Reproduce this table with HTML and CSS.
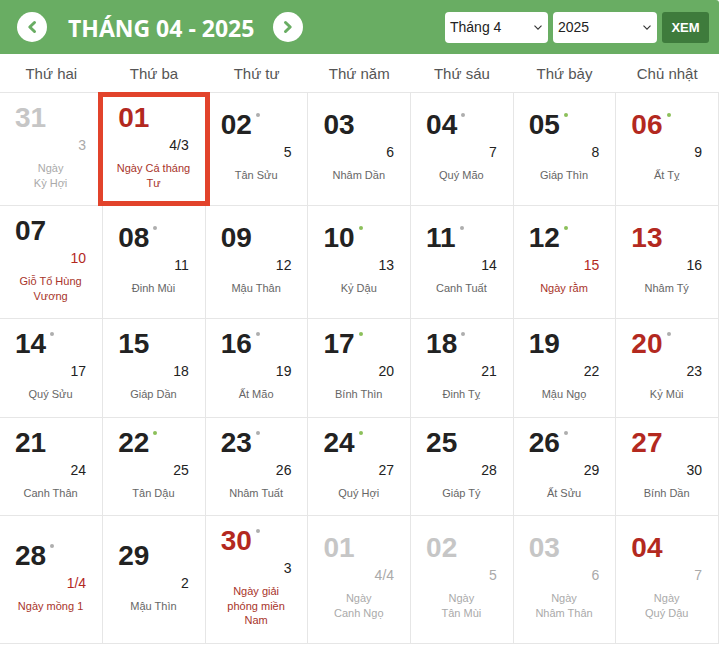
FILE: index.html
```html
<!DOCTYPE html>
<html lang="vi">
<head>
<meta charset="utf-8">
<title>Lịch tháng 04 - 2025</title>
<link rel="stylesheet" href="styles.css">
</head>
<body>
<div class="cal">
  <div class="top">
    <div class="nav">
      <button class="circ" aria-label="Tháng trước"><svg width="30" height="30" viewBox="0 0 30 30"><polyline points="17.5,10.5 12.8,15 17.5,19.5" fill="none" stroke="#69ad63" stroke-width="3" stroke-linecap="round" stroke-linejoin="round"/></svg></button>
      <h1 class="title">THÁNG 04 - 2025</h1>
      <button class="circ" aria-label="Tháng sau"><svg width="30" height="30" viewBox="0 0 30 30"><polyline points="12.5,10.5 17.2,15 12.5,19.5" fill="none" stroke="#69ad63" stroke-width="3" stroke-linecap="round" stroke-linejoin="round"/></svg></button>
    </div>
    <div class="form">
      <div class="sel"><span>Tháng 4</span><svg width="8" height="5" viewBox="0 0 8 5"><polyline points="0.5,0.6 4,4.2 7.5,0.6" fill="none" stroke="#333" stroke-width="1.1"/></svg></div>
      <div class="sel sel-y"><span>2025</span><svg width="8" height="5" viewBox="0 0 8 5"><polyline points="0.5,0.6 4,4.2 7.5,0.6" fill="none" stroke="#333" stroke-width="1.1"/></svg></div>
      <button class="go">XEM</button>
    </div>
  </div>
  <table class="grid">
    <thead>
      <tr><th>Thứ hai</th><th>Thứ ba</th><th>Thứ tư</th><th>Thứ năm</th><th>Thứ sáu</th><th>Thứ bảy</th><th>Chủ nhật</th></tr>
    </thead>
    <tbody>
      <tr>
        <td class="out"><div class="n">31</div><div class="l">3</div><div class="t">Ngày<br>Kỳ Hợi</div></td>
        <td class="today"><div class="n red">01</div><div class="l">4/3</div><div class="t ev">Ngày Cá tháng Tư</div></td>
        <td><div class="n">02<i class="dot gy"></i></div><div class="l">5</div><div class="t">Tân Sửu</div></td>
        <td><div class="n">03</div><div class="l">6</div><div class="t">Nhâm Dần</div></td>
        <td><div class="n">04<i class="dot gy"></i></div><div class="l">7</div><div class="t">Quý Mão</div></td>
        <td><div class="n">05<i class="dot gr"></i></div><div class="l">8</div><div class="t">Giáp Thìn</div></td>
        <td><div class="n red">06<i class="dot gr"></i></div><div class="l">9</div><div class="t">Ất Tỵ</div></td>
      </tr>
      <tr>
        <td><div class="n">07</div><div class="l red">10</div><div class="t ev">Giỗ Tổ Hùng Vương</div></td>
        <td><div class="n">08<i class="dot gy"></i></div><div class="l">11</div><div class="t">Đinh Mùi</div></td>
        <td><div class="n">09</div><div class="l">12</div><div class="t">Mậu Thân</div></td>
        <td><div class="n">10<i class="dot gr"></i></div><div class="l">13</div><div class="t">Kỷ Dậu</div></td>
        <td><div class="n">11<i class="dot gy"></i></div><div class="l">14</div><div class="t">Canh Tuất</div></td>
        <td><div class="n">12<i class="dot gr"></i></div><div class="l red">15</div><div class="t ev">Ngày rằm</div></td>
        <td><div class="n red">13</div><div class="l">16</div><div class="t">Nhâm Tý</div></td>
      </tr>
      <tr>
        <td><div class="n">14<i class="dot gy"></i></div><div class="l">17</div><div class="t">Quý Sửu</div></td>
        <td><div class="n">15</div><div class="l">18</div><div class="t">Giáp Dần</div></td>
        <td><div class="n">16<i class="dot gy"></i></div><div class="l">19</div><div class="t">Ất Mão</div></td>
        <td><div class="n">17<i class="dot gr"></i></div><div class="l">20</div><div class="t">Bính Thìn</div></td>
        <td><div class="n">18<i class="dot gy"></i></div><div class="l">21</div><div class="t">Đinh Tỵ</div></td>
        <td><div class="n">19</div><div class="l">22</div><div class="t">Mậu Ngọ</div></td>
        <td><div class="n red">20<i class="dot gy"></i></div><div class="l">23</div><div class="t">Kỷ Mùi</div></td>
      </tr>
      <tr>
        <td><div class="n">21</div><div class="l">24</div><div class="t">Canh Thân</div></td>
        <td><div class="n">22<i class="dot gr"></i></div><div class="l">25</div><div class="t">Tân Dậu</div></td>
        <td><div class="n">23<i class="dot gy"></i></div><div class="l">26</div><div class="t">Nhâm Tuất</div></td>
        <td><div class="n">24<i class="dot gr"></i></div><div class="l">27</div><div class="t">Quý Hợi</div></td>
        <td><div class="n">25</div><div class="l">28</div><div class="t">Giáp Tý</div></td>
        <td><div class="n">26<i class="dot gy"></i></div><div class="l">29</div><div class="t">Ất Sửu</div></td>
        <td><div class="n red">27</div><div class="l">30</div><div class="t">Bính Dần</div></td>
      </tr>
      <tr>
        <td><div class="n">28<i class="dot gy"></i></div><div class="l red">1/4</div><div class="t ev">Ngày mồng 1</div></td>
        <td><div class="n">29</div><div class="l">2</div><div class="t">Mậu Thìn</div></td>
        <td><div class="n red">30<i class="dot gy"></i></div><div class="l">3</div><div class="t ev">Ngày giải phóng miền Nam</div></td>
        <td class="out"><div class="n">01</div><div class="l">4/4</div><div class="t">Ngày<br>Canh Ngọ</div></td>
        <td class="out"><div class="n">02</div><div class="l">5</div><div class="t">Ngày<br>Tân Mùi</div></td>
        <td class="out"><div class="n">03</div><div class="l">6</div><div class="t">Ngày<br>Nhâm Thân</div></td>
        <td class="out"><div class="n red">04</div><div class="l">7</div><div class="t">Ngày<br>Quý Dậu</div></td>
      </tr>
    </tbody>
  </table>
</div>
</body>
</html>
```
FILE: styles.css
```css
body {
  margin: 0;
  background: #fff;
  font-family: "Liberation Sans", Arial, sans-serif;
  color: #222;
}

.cal {
  width: 719px;
}

.top {
  height: 54px;
  background: #69ad63;
  display: flex;
  align-items: center;
  justify-content: space-between;
  padding: 0 10px 0 17px;
  box-sizing: border-box;
  border-top-right-radius: 3px;
}

.nav {
  display: flex;
  align-items: center;
}

.circ {
  width: 30px;
  height: 30px;
  border-radius: 50%;
  background: #fff;
  border: 0;
  padding: 0;
  display: flex;
  align-items: center;
  justify-content: center;
}

.circ svg {
  display: block;
}

.title {
  margin: 0 19px 0 21px;
  font-family: "Open Sans", "Liberation Sans", sans-serif;
  font-weight: 700;
  font-size: 23px;
  line-height: 1;
  color: #fff;
  padding-top: 2px;
}

.form {
  display: flex;
  align-items: center;
  gap: 5px;
}

.sel {
  width: 103px;
  height: 31px;
  background: #fff;
  border-radius: 4px;
  display: flex;
  align-items: center;
  justify-content: space-between;
  padding: 0 6px 0 5px;
  box-sizing: border-box;
  font-size: 14px;
  color: #222;
}

.sel-y {
  width: 104px;
}

.sel svg {
  display: block;
}

.go {
  width: 47px;
  height: 31px;
  border: 0;
  border-radius: 3px;
  background: #3e7b3c;
  color: #fff;
  font-family: "Liberation Sans", Arial, sans-serif;
  font-weight: 700;
  font-size: 13px;
  padding: 0;
}

.grid {
  width: 719px;
  border-collapse: collapse;
  table-layout: fixed;
}

.grid th {
  height: 38px;
  padding: 0;
  font-weight: 400;
  font-size: 15px;
  color: #555;
  border-bottom: 1px solid #e6e6e6;
}

.grid td {
  border-right: 1px solid #e6e6e6;
  border-bottom: 1px solid #e6e6e6;
  vertical-align: middle;
  padding: 11px 16px 15px 15px;
}

.n {
  font-size: 28px;
  font-weight: 700;
  line-height: 28px;
  color: #222;
  white-space: nowrap;
}

.dot {
  display: inline-block;
  width: 4px;
  height: 4px;
  border-radius: 50%;
  vertical-align: top;
  margin: 2px 0 0 4px;
}

.dot.gy { background: #aeaeae; }
.dot.gr { background: #8cc05a; }

.l {
  text-align: right;
  font-size: 14px;
  line-height: 16px;
  margin-top: 5px;
  color: #222;
}

.t {
  text-align: center;
  font-size: 11px;
  line-height: 14.5px;
  color: #666;
  margin: 8px -10px 0;
}

.t.ev { color: #a8342a; margin: 8px -2px 0; }

.n.red, .l.red { color: #b3291f; }

.out .n { color: #c6c6c6; }
.out .n.red { color: #b3291f; }
.out .l, .out .t { color: #aaa; }

.today {
  position: relative;
}

.today::after {
  content: "";
  position: absolute;
  top: -1px;
  bottom: -1px;
  left: -5px;
  right: -5px;
  border: 5px solid #e2432b;
  pointer-events: none;
}
```
